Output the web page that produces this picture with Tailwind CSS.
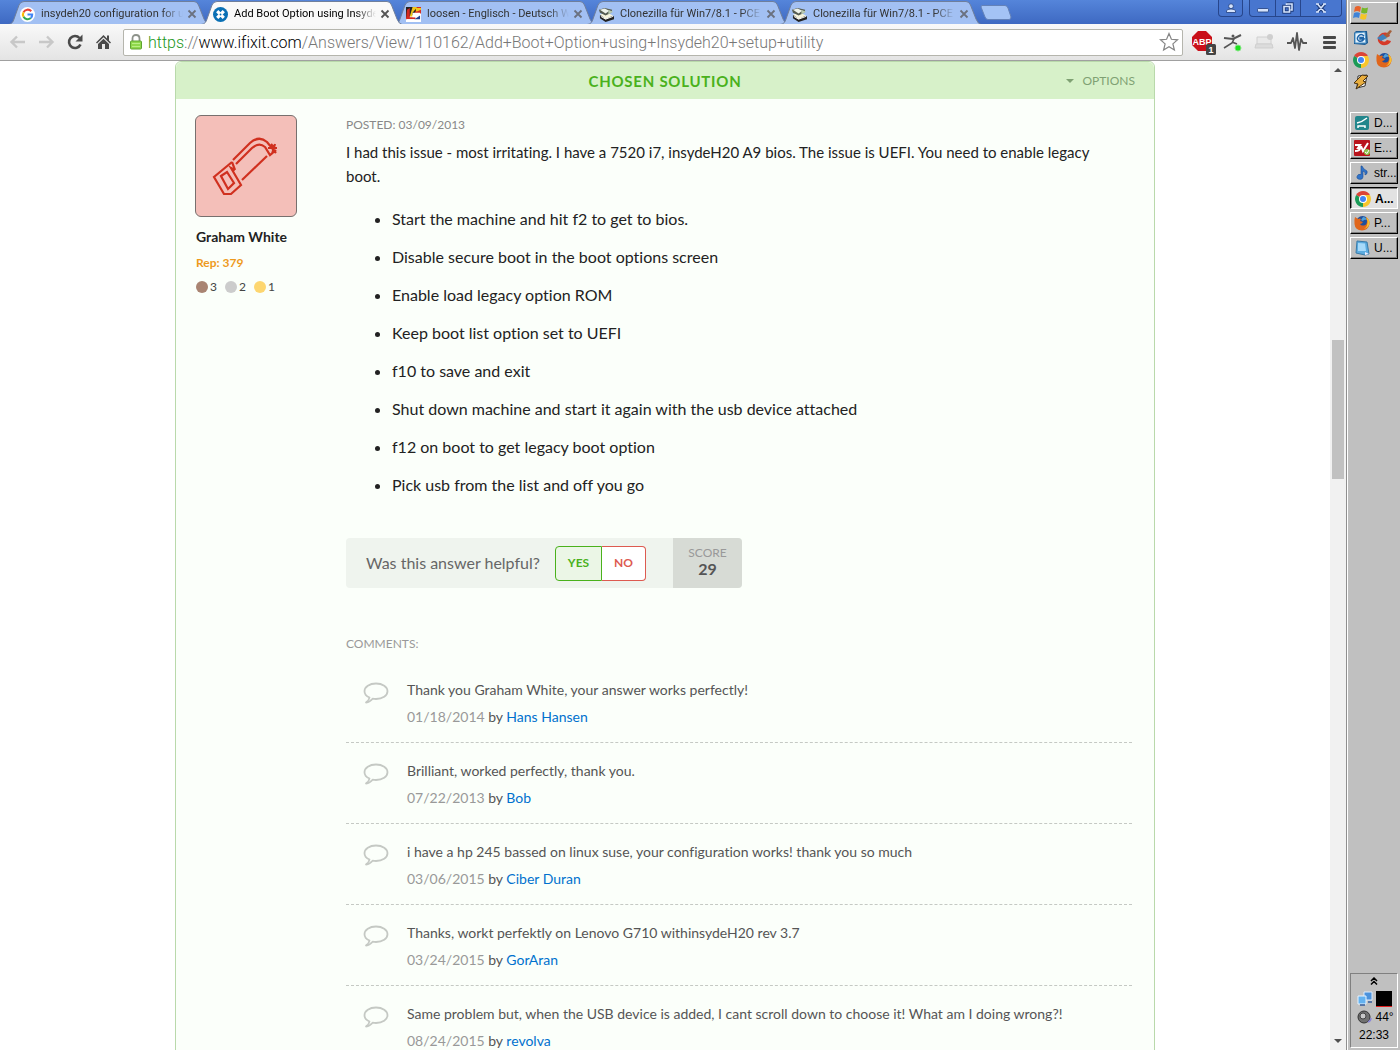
<!DOCTYPE html>
<html lang="en">
<head>
    <meta charset="UTF-8">
    <meta name="viewport" content="width=device-width, initial-scale=1.0">
    <title>Add Boot Option using Insydeh20 setup utility</title>
    <script src="https://cdn.jsdelivr.net/npm/@tailwindcss/browser@4"></script>
</head>
<body class="flex h-screen overflow-hidden bg-white font-['Lato',sans-serif] text-[#222] [font-variant-ligatures:none]">
    <!-- shared icons -->
    <svg class="hidden">
        <symbol id="tab" viewBox="0 0 201 24" preserveAspectRatio="none">
            <path d="M0 24.5C4 24 5 22 6 19L11 5Q12.500 1.500 16 1.500H186Q189 1.500 190.500 5L196 19Q198 24 201 24.500Z" stroke="#6f7f9c"/>
        </symbol>
        <symbol id="close" viewBox="0 0 10 10">
            <path d="M1.500 1.500L8.500 8.500M8.500 1.500L1.500 8.500" stroke="currentColor" stroke-width="1.800" fill="none"/>
        </symbol>
        <symbol id="clonezilla" viewBox="0 0 16 16">
            <path d="M1 9L8 7L16 10V13L7 16L1 12Z" fill="#222"/>
            <path d="M1 8L9 6L15 9L7 13Z" fill="#f5f3dc"/>
            <path d="M0 3L6 1L14 3L13 6L7 9L1 6Z" fill="#555b50"/>
            <path d="M1 3L6 1.500L11 4L7 7Z" fill="#eef2ea"/>
            <path d="M10 3L15 5L10 8Z" fill="#b8c9b0"/>
            <path d="M2 10L7 13L15 10" stroke="#fff" fill="none"/>
        </symbol>
        <symbol id="chrome" viewBox="0 0 16 16">
            <path d="M8 8L1.100 4A8 8 0 0 1 14.900 4Z" fill="#dc4437"/>
            <path d="M8 8L14.900 4A8 8 0 0 1 8 16Z" fill="#f8c62c"/>
            <path d="M8 8L8 16A8 8 0 0 1 1.100 4Z" fill="#1b9a57"/>
            <path d="M8 4H14.900L11.500 10L8 16" fill="#f8c62c"/>
            <circle cx="8" cy="8" r="4" fill="#fff"/>
            <circle cx="8" cy="8" r="3" fill="#4285f4"/>
        </symbol>
        <symbol id="firefox" viewBox="0 0 16 16">
            <circle cx="8.500" cy="7.500" r="6.500" fill="#204f9c"/>
            <path d="M9 2Q12 2 13 5Q10 4 9 6L7 5Z" fill="#4fa0d8"/>
            <path d="M1 2L4 4Q6 3 7 4L6 6L9 7Q8 9 6 9Q7 11 10 10.500Q13 10 13 6L12 2Q16 5 15.500 9Q14 15.500 8 15.500Q1 15 .500 9Q0 5 1 2Z" fill="#e0661c"/>
            <path d="M12 2Q16 5 15.500 9Q14 13 10 14Q14 11 13.500 6Z" fill="#f8c030"/>
        </symbol>
        <symbol id="bubble" viewBox="0 0 26 22">
            <path d="M6.500 15.500C3 14 1.500 11.700 1.500 9.200C1.500 4.900 6.500 1.500 13 1.500S24.500 4.900 24.500 9.200S19.500 17 13 17C11.800 17 10.700 16.900 9.600 16.700C8 18.800 5.500 20.200 3 20.500C5 19 6.300 17.300 6.500 15.500Z" fill="none" stroke="#c5c9c4" stroke-width="1.800" stroke-linejoin="round"/>
        </symbol>
    </svg>

    <div class="flex min-w-0 flex-1 flex-col border-r border-[#8f8f8f]">
        <!-- tab strip -->
        <header class="flex h-6 shrink-0 justify-between bg-linear-to-b from-[#5585da] to-[#3e69c2] font-['Roboto',sans-serif] text-[11px] text-[#333]">
            <nav class="flex pl-2">
                <a href="#" class="relative flex w-[193px] items-center pt-1 pl-3">
                    <svg class="absolute top-0 left-0 h-6 w-[201px] fill-[#a2c0f3]"><use href="#tab"/></svg>
                    <svg class="relative mr-1.5 size-[15px] shrink-0" viewBox="0 0 16 16">
                        <circle cx="8" cy="8" r="8" fill="#fff"/>
                        <g fill="none" stroke-width="2.200">
                            <path d="M12 4.500A5 5 0 0 0 3.800 5.500" stroke="#ea4335"/>
                            <path d="M3.800 5.500A5 5 0 0 0 3.800 10.500" stroke="#fbbc05"/>
                            <path d="M3.800 10.500A5 5 0 0 0 11.500 11.800" stroke="#34a853"/>
                            <path d="M8 8H13A5 5 0 0 1 11.500 11.800" stroke="#4285f4"/>
                        </g>
                    </svg>
                    <span class="relative w-[142px] mask-r-from-85% whitespace-nowrap">insydeh20 configuration for u</span>
                    <svg class="relative ml-1 size-2.5 shrink-0 text-[#6a7180]"><use href="#close"/></svg>
                </a>
                <a href="#" class="relative z-10 flex w-[193px] items-center pt-1 pl-3 text-black">
                    <svg class="absolute top-0 left-0 h-6 w-[201px] fill-[#f9f9f9]"><use href="#tab"/></svg>
                    <svg class="relative mr-1.5 size-[15px] shrink-0" viewBox="0 0 16 16">
                        <circle cx="8" cy="8" r="8" fill="#0a70b5"/>
                        <path d="M4.500 4.500L11.500 11.500M11.500 4.500L4.500 11.500" stroke="#fff" stroke-width="3.400"/>
                        <circle cx="8" cy="8" r="1" fill="#0a70b5"/>
                    </svg>
                    <span class="relative w-[142px] mask-r-from-85% whitespace-nowrap">Add Boot Option using Insyde</span>
                    <svg class="relative ml-1 size-2.5 shrink-0 text-[#555]"><use href="#close"/></svg>
                </a>
                <a href="#" class="relative flex w-[193px] items-center pt-1 pl-3">
                    <svg class="absolute top-0 left-0 h-6 w-[201px] fill-[#a2c0f3]"><use href="#tab"/></svg>
                    <svg class="relative mr-1.5 size-[15px] shrink-0" viewBox="0 0 16 16">
                        <rect width="16" height="16" fill="#fff"/>
                        <path d="M0 0H16V4L0 12Z" fill="#222"/>
                        <path d="M7 0H12L7 6V10H4Z" fill="#f2c617"/>
                        <path d="M12 0H16V7H9Z" fill="#d52a20"/>
                        <path d="M10 1H16V3L11 5Z" fill="#f2c617"/>
                        <path d="M1 3L4 1V11H10V13H0Z" fill="#d52a20"/>
                        <path d="M7 6H15V8H10V9H15V13L11 14H16V16H1V13H12V11H7Z" fill="#fff"/>
                        <path d="M9 13L15 9L15 13Z" fill="#22408f"/>
                    </svg>
                    <span class="relative w-[142px] mask-r-from-85% whitespace-nowrap">loosen - Englisch - Deutsch W</span>
                    <svg class="relative ml-1 size-2.5 shrink-0 text-[#6a7180]"><use href="#close"/></svg>
                </a>
                <a href="#" class="relative flex w-[193px] items-center pt-1 pl-3">
                    <svg class="absolute top-0 left-0 h-6 w-[201px] fill-[#a2c0f3]"><use href="#tab"/></svg>
                    <svg class="relative mr-1.5 size-[15px] shrink-0"><use href="#clonezilla"/></svg>
                    <span class="relative w-[142px] mask-r-from-85% whitespace-nowrap">Clonezilla für Win7/8.1 - PCE</span>
                    <svg class="relative ml-1 size-2.5 shrink-0 text-[#6a7180]"><use href="#close"/></svg>
                </a>
                <a href="#" class="relative flex w-[193px] items-center pt-1 pl-3">
                    <svg class="absolute top-0 left-0 h-6 w-[201px] fill-[#a2c0f3]"><use href="#tab"/></svg>
                    <svg class="relative mr-1.5 size-[15px] shrink-0"><use href="#clonezilla"/></svg>
                    <span class="relative w-[142px] mask-r-from-85% whitespace-nowrap">Clonezilla für Win7/8.1 - PCE</span>
                    <svg class="relative ml-1 size-2.5 shrink-0 text-[#6a7180]"><use href="#close"/></svg>
                </a>
                <button class="mt-[5px] ml-[7px] h-4" aria-label="New tab">
                    <svg class="h-4 w-8" viewBox="0 0 32 16"><path d="M2 0.500H25Q27 .500 28 3L31 12Q31 14.500 29 14.500H8Q6 14.500 5 12L1 2Q1 .500 2 .500Z" fill="#a4c3f5" stroke="#6482b8"/></svg>
                </button>
            </nav>
            <div class="flex gap-1.5 pr-1">
                <button class="flex h-[17px] w-[25px] items-center justify-center rounded-b-sm border border-t-0 border-[#27468c] bg-[#4876cf]" aria-label="Profile">
                    <svg class="size-2.5" viewBox="0 0 10 10" fill="#d5e3fb" stroke="#1f3c7c" stroke-width=".800"><path d="M.500 9.500V8Q.500 6 5 6T9.500 8V9.500Z"/><circle cx="5" cy="3.200" r="2.400"/></svg>
                </button>
                <div class="flex h-[17px] w-[93px] divide-x divide-[#27468c] rounded-b-sm border border-t-0 border-[#27468c] bg-[#4876cf]">
                    <button class="flex w-[26px] items-center justify-center pt-1" aria-label="Minimize">
                        <svg class="h-1.5 w-3" viewBox="0 0 12 6"><rect x=".500" y="1.500" width="11" height="3.500" rx="1" fill="#d5e3fb" stroke="#1f3c7c" stroke-width=".800"/></svg>
                    </button>
                    <button class="flex w-[25px] items-center justify-center" aria-label="Restore">
                        <svg class="size-3" viewBox="0 0 12 12" fill="none"><path d="M4.500 2H10V8H8.500M2 4.500H7.500V10H2Z" stroke="#1f3c7c" stroke-width="3.400"/><path d="M4.500 3V2H10V8H8.500M2 4.500H7.500V10H2Z" stroke="#d5e3fb" stroke-width="1.600"/></svg>
                    </button>
                    <button class="flex flex-1 items-center justify-center" aria-label="Close window">
                        <svg class="h-2.5 w-3" viewBox="0 0 12 10" fill="none"><path d="M2.500 1L9.500 9M9.500 1L2.500 9" stroke="#1f3c7c" stroke-width="3.600"/><path d="M2.500 1L9.500 9M9.500 1L2.500 9M1 1H4M8 1H11M1 9H4M8 9H11" stroke="#d5e3fb" stroke-width="1.600"/></svg>
                    </button>
                </div>
            </div>
        </header>

        <!-- toolbar -->
        <div class="flex h-[37px] shrink-0 items-center border-b border-[#a0a0a0] bg-linear-to-b from-[#f9f9f9] to-[#e4e4e4] pr-[5px] pl-[9px]">
            <div class="flex w-[114px] items-center gap-3">
                <button aria-label="Back"><svg class="h-4 w-[17px]" viewBox="0 0 17 16" fill="none" stroke="#c8c8c8" stroke-width="2.400"><path d="M8 2.500L2.500 8L8 13.500M2.500 8H16"/></svg></button>
                <button aria-label="Forward"><svg class="h-4 w-[17px]" viewBox="0 0 17 16" fill="none" stroke="#c8c8c8" stroke-width="2.400"><path d="M9 2.500L14.500 8L9 13.500M14.500 8H1"/></svg></button>
                <button aria-label="Reload"><svg class="h-4 w-[17px]" viewBox="0 0 17 16"><path d="M13.500 10.500A6 6 0 1 1 12.500 4" fill="none" stroke="#4a4a4a" stroke-width="2.600"/><path d="M15.500 .500V7.500H8.500Z" fill="#4a4a4a"/></svg></button>
                <button aria-label="Home"><svg class="h-4 w-[15px]" viewBox="0 0 15 16" fill="#4a4a4a"><path d="M7.500 1L11 4.500V1.500H13V6.500L15 8.500L14 9.500L7.500 3.200L1 9.500L0 8.500Z"/><path d="M7.500 4.700L13 10V15H9V10H6V15H2V10Z"/></svg></button>
            </div>
            <div class="flex h-[27px] min-w-0 flex-1 items-center rounded-xs border border-[#b5b5ad] bg-white pr-[3px] pl-1.5">
                <svg class="h-4 w-3 shrink-0" viewBox="0 0 12 16"><path d="M2.500 8V4.500Q2.500 1 6 1T9.500 4.500V8" fill="none" stroke="#8d928a" stroke-width="1.800"/><rect x=".500" y="7" width="11" height="8" rx="1" fill="#8fd84b" stroke="#5ea331"/><path d="M2 9.500H10M2 12.500H10" stroke="#b9ef85"/></svg>
                <div class="min-w-0 flex-1 pt-0.5 pl-1.5 font-['Roboto',sans-serif] text-base font-light whitespace-nowrap text-[#777]"><span class="text-[#1b961b]">https</span>://<span class="text-black">www.ifixit.com</span>/Answers/View/110162/Add+Boot+Option+using+Insydeh20+setup+utility</div>
                <button aria-label="Bookmark this page"><svg class="size-5" viewBox="0 0 20 20"><path d="M10 1.500L12.400 7.300L18.600 7.800L13.900 11.900L15.400 18L10 14.700L4.600 18L6.100 11.900L1.400 7.800L7.600 7.300Z" fill="#fff" stroke="#858585" stroke-width="1.200"/></svg></button>
            </div>
            <div class="flex items-center gap-2 pl-1.5">
                <button aria-label="Adblock Plus"><svg class="size-6 overflow-visible" viewBox="-3 0 24 24"><path d="M6 1H14L20 7V15L14 21H6L0 15V7Z" fill="#c9101a"/><text x="10" y="14.500" font-family="Liberation Sans" font-size="9" font-weight="700" fill="#fff" text-anchor="middle">ABP</text><rect x="14" y="14" width="10" height="11" rx="1.500" fill="#444"/><text x="19" y="23" font-family="Liberation Sans" font-size="9" font-weight="700" fill="#fff" text-anchor="middle">1</text></svg></button>
                <button aria-label="Extension"><svg class="h-6 w-6" viewBox="0 0 24 24" fill="none" stroke="#555"><path d="M3 8L12 9L20 5" stroke-width="2"/><path d="M13 9L11 13L3 18M11 12L16 14" stroke-width="1.600"/><circle cx="12" cy="6" r="1.500" fill="#555" stroke="none"/><circle cx="17" cy="18" r="3" fill="#1de01d" stroke="#85e685"/></svg></button>
                <button aria-label="Capture"><svg class="h-6 w-6" viewBox="0 0 24 24"><path d="M4 7H18V14H4Z" fill="#e9e9e9" stroke="#d0d0d0"/><path d="M3 14H19L20 18H2Z" fill="#dcdcdc" stroke="#cfcfcf"/><circle cx="17" cy="7" r="3" fill="#cfcfcf"/></svg></button>
                <button aria-label="Monitor"><svg class="h-6 w-6" viewBox="0 0 24 24" fill="none" stroke="#555" stroke-width="1.800" stroke-linejoin="round"><path d="M2 13H6L8 8L10 18L12 3L14 20L16 9L18 13H22"/></svg></button>
                <button aria-label="Menu"><svg class="h-6 w-6" viewBox="0 0 24 24" fill="#484848"><rect x="6" y="6" width="13" height="3" rx="1"/><rect x="6" y="11" width="13" height="3" rx="1"/><rect x="6" y="16" width="13" height="3" rx="1"/></svg></button>
            </div>
        </div>

        <div class="flex min-h-0 flex-1">
            <!-- page -->
            <main class="min-w-0 flex-1 overflow-hidden">
                <article class="mx-auto max-w-[980px] rounded-t-md border border-[#b9d9ab] bg-[#fbfffa]">
                    <div class="grid h-[37px] grid-cols-3 items-center rounded-t-md bg-[#d7f1c9] px-[19px]">
                        <h2 class="col-start-2 text-center text-[15px] leading-5 font-bold tracking-wider whitespace-nowrap text-[#4ab11c]">CHOSEN SOLUTION</h2>
                        <button class="flex items-center gap-2 justify-self-end text-xs text-[#7fa173]">
                            <svg class="h-1 w-2" viewBox="0 0 8 4"><path d="M0 0H8L4 4Z" fill="#7fa173"/></svg>OPTIONS
                        </button>
                    </div>
                    <div class="flex pt-4 pr-[22px] pl-[19px]">
                        <aside class="w-[151px] shrink-0">
                            <svg class="size-[102px] rounded-md border border-[#77706e] bg-[#f4bfb9]" viewBox="0 0 100 100" fill="none" stroke="#d0301f" stroke-width="2.200">
                                <path d="M37 44L54 27Q63 19 71 26L80 37M40 48L56 32Q63 26 69 31L74 39L80 34M75 28L79 33M72 32L81 32M79 28L76 38"/>
                                <path d="M46 64L71 40"/>
                                <path d="M36 46L18 61L28 78L35 78L45 69L35 52L39 54"/>
                                <path d="M36 46L39 54"/>
                                <path d="M25 60L31 56L38 67L32 73Z"/>
                            </svg>
                            <div class="pl-px">
                                <a href="#" class="mt-2.5 block text-sm font-bold">Graham White</a>
                                <div class="mt-2 text-xs leading-4 font-bold text-[#ee9a1c]">Rep: 379</div>
                                <div class="mt-2 flex gap-2 text-xs leading-4 text-[#444]">
                                    <span class="flex items-center gap-0.5"><i class="size-3 rounded-full bg-[#a98472]"></i>3</span>
                                    <span class="flex items-center gap-0.5"><i class="size-3 rounded-full bg-[#ccc]"></i>2</span>
                                    <span class="flex items-center gap-0.5"><i class="size-3 rounded-full bg-[#fdd670]"></i>1</span>
                                </div>
                            </div>
                        </aside>
                        <section class="min-w-0 flex-1">
                            <div class="pt-0.5 text-xs leading-4 text-[#888]">POSTED: 03/09/2013</div>
                            <p class="mt-[7px] pr-4 text-[15px] leading-6">I had this issue - most irritating. I have a 7520 i7, insydeH20 A9 bios. The issue is UEFI. You need to enable legacy boot.</p>
                            <ul class="mt-[19px] flex list-disc flex-col gap-3.5 pl-[46px] text-base leading-6">
                                <li>Start the machine and hit f2 to get to bios.</li>
                                <li>Disable secure boot in the boot options screen</li>
                                <li>Enable load legacy option ROM</li>
                                <li>Keep boot list option set to UEFI</li>
                                <li>f10 to save and exit</li>
                                <li>Shut down machine and start it again with the usb device attached</li>
                                <li>f12 on boot to get legacy boot option</li>
                                <li>Pick usb from the list and off you go</li>
                            </ul>
                            <div class="mt-[41px] flex h-[50px] w-[396px] items-center overflow-hidden rounded-sm bg-[#eff4ee] pl-5">
                                <span class="flex-1 text-base text-[#666]">Was this answer helpful?</span>
                                <button class="h-[35px] w-[47px] rounded-l-sm border border-[#4ab11c] bg-[#ebf6e6] text-xs font-bold text-[#4ab11c]">YES</button>
                                <button class="h-[35px] w-11 rounded-r-sm border border-l-0 border-[#dd5a50] bg-white text-xs font-bold text-[#dd5a50]">NO</button>
                                <div class="ml-[27px] h-full w-[69px] bg-[#d7dbd5] pt-[7px] text-center">
                                    <div class="text-xs leading-4 text-[#999]">SCORE</div>
                                    <div class="text-base leading-4 font-bold text-[#555]">29</div>
                                </div>
                            </div>
                            <h3 class="mt-12 text-xs leading-4 text-[#999]">COMMENTS:</h3>
                            <ul class="mt-2.5 text-sm leading-[27px] text-[#555]">
                                <li class="flex border-b border-dashed border-[#c5c9c4] pt-3.5 pb-3 pl-[17px]">
                                    <svg class="mt-1.5 mr-[18px] h-[22px] w-[26px] shrink-0"><use href="#bubble"/></svg>
                                    <div><p>Thank you Graham White, your answer works perfectly!</p><p><span class="text-[#999]">01/18/2014</span> by <a href="#" class="text-[#0071ce]">Hans Hansen</a></p></div>
                                </li>
                                <li class="flex border-b border-dashed border-[#c5c9c4] pt-3.5 pb-3 pl-[17px]">
                                    <svg class="mt-1.5 mr-[18px] h-[22px] w-[26px] shrink-0"><use href="#bubble"/></svg>
                                    <div><p>Brilliant, worked perfectly, thank you.</p><p><span class="text-[#999]">07/22/2013</span> by <a href="#" class="text-[#0071ce]">Bob</a></p></div>
                                </li>
                                <li class="flex border-b border-dashed border-[#c5c9c4] pt-3.5 pb-3 pl-[17px]">
                                    <svg class="mt-1.5 mr-[18px] h-[22px] w-[26px] shrink-0"><use href="#bubble"/></svg>
                                    <div><p>i have a hp 245 bassed on linux suse, your configuration works! thank you so much</p><p><span class="text-[#999]">03/06/2015</span> by <a href="#" class="text-[#0071ce]">Ciber Duran</a></p></div>
                                </li>
                                <li class="flex border-b border-dashed border-[#c5c9c4] pt-3.5 pb-3 pl-[17px]">
                                    <svg class="mt-1.5 mr-[18px] h-[22px] w-[26px] shrink-0"><use href="#bubble"/></svg>
                                    <div><p>Thanks, workt perfektly on Lenovo G710 withinsydeH20 rev 3.7</p><p><span class="text-[#999]">03/24/2015</span> by <a href="#" class="text-[#0071ce]">GorAran</a></p></div>
                                </li>
                                <li class="flex border-b border-dashed border-[#c5c9c4] pt-3.5 pb-3 pl-[17px]">
                                    <svg class="mt-1.5 mr-[18px] h-[22px] w-[26px] shrink-0"><use href="#bubble"/></svg>
                                    <div><p>Same problem but, when the USB device is added, I cant scroll down to choose it! What am I doing wrong?!</p><p><span class="text-[#999]">08/24/2015</span> by <a href="#" class="text-[#0071ce]">revolva</a></p></div>
                                </li>
                            </ul>
                        </section>
                    </div>
                </article>
            </main>
            <!-- scrollbar -->
            <div class="flex w-4 shrink-0 flex-col items-center bg-[#f1f1f1] py-[7px]">
                <svg class="h-1 w-2" viewBox="0 0 8 4"><path d="M0 4L4 0L8 4Z" fill="#505050"/></svg>
                <div class="flex w-3 flex-1 flex-col"><div class="flex-[268]"></div><div class="flex-[139] bg-[#c1c1c1]"></div><div class="flex-[560]"></div></div>
                <svg class="h-1 w-2" viewBox="0 0 8 4"><path d="M0 0L4 4L8 0Z" fill="#505050"/></svg>
            </div>
        </div>
    </div>

    <!-- taskbar -->
    <aside class="flex w-[53px] shrink-0 flex-col border-l border-white bg-[#c0c0c0] px-0.5 py-0.5 font-['Liberation_Sans',sans-serif] text-xs text-black">
        <button class="flex h-[22px] items-center border border-t-white border-r-black border-b-black border-l-white pl-0.5 shadow-[inset_-1px_-1px_#808080]" aria-label="Start">
            <svg class="size-4" viewBox="0 0 16 16"><path d="M2 2Q5 0 8 2L7 7Q4 5 1 7Z" fill="#e8622a"/><path d="M9 2.500Q12 4 15 2.500L14 8Q11 9 8 7.500Z" fill="#76b82a"/><path d="M1 8Q4 6.500 7 8L6 13Q3 11.500 0 13Z" fill="#3f83d8"/><path d="M8 8.500Q11 10 14 9L13 14Q10 15.500 7 13.500Z" fill="#f5c526"/></svg>
        </button>
        <div class="grid grid-cols-[16px_16px] gap-x-[7px] gap-y-1.5 pt-1.5 pl-[3px]">
            <svg class="size-4" viewBox="0 0 16 16"><path d="M3 1H14L15 13L12 15L1 14V3Z" fill="#1c5b94"/><path d="M2 3L12 2L13 13L2 13Z" fill="#e6f2fb" stroke="#4a93c8"/><path d="M11 6Q8 3 5.500 6T6 11Q9 12 11 9H7V7.500H11" fill="none" stroke="#1d64a8" stroke-width="1.500"/></svg>
            <svg class="size-4" viewBox="0 0 16 16"><path d="M14 6Q12 1 6 3Q1 6 2 11Q4 16 10 15Q14 14 15 11L11 10Q9 13 6 11Q5 8 8 6L12 7Z" fill="#d63a28"/><path d="M14 0L16 1L11 8L8 6Z" fill="#a5603a"/><path d="M1 8L7 4L11 8L5 11Z" fill="#3f82bd"/></svg>
            <svg class="size-4"><use href="#chrome"/></svg>
            <svg class="size-4"><use href="#firefox"/></svg>
            <svg class="size-4" viewBox="0 0 16 16"><path d="M5 2L14 1L12 12L4 14Z" fill="#fff" stroke="#333"/><path d="M9 1L15 2L10 7L13 8L3 15L5 10L1 9Z" fill="#e9ae3e" stroke="#4a3210"/></svg>
        </div>
        <div class="mt-[22px] flex flex-col gap-[3px]">
            <button class="flex h-[22px] items-center gap-1 border border-t-white border-r-black border-b-black border-l-white pl-[3px] shadow-[inset_-1px_-1px_#808080]">
                <svg class="size-4 shrink-0" viewBox="0 0 16 16"><rect x="1" y="1" width="14" height="14" rx="2" fill="#21868c"/><path d="M3 8Q8 7 13 3M4 13V11H11V13" fill="none" stroke="#fff" stroke-width="1.500"/></svg>D...
            </button>
            <button class="flex h-[22px] items-center gap-1 border border-t-white border-r-black border-b-black border-l-white pl-[3px] shadow-[inset_-1px_-1px_#808080]">
                <svg class="size-4 shrink-0" viewBox="0 0 16 16"><rect width="16" height="16" rx="1" fill="#b9141c"/><path d="M1 5H6L4 8H6Q6 11 1 11M7 6L9 11L14 3" fill="none" stroke="#fff" stroke-width="2"/><circle cx="13" cy="12" r="3" fill="#8bc34a"/><path d="M11 12L13 13.500L15 10" fill="none" stroke="#fff"/></svg>E...
            </button>
            <button class="flex h-[22px] items-center gap-1 border border-t-white border-r-black border-b-black border-l-white pl-[3px] shadow-[inset_-1px_-1px_#808080]">
                <svg class="size-4 shrink-0" viewBox="0 0 16 16"><path d="M8 1Q9 4 13 6Q14 9 11 10Q12 7 9 6V12A3 2.500 0 1 1 7 9.500V1Z" fill="#2f73c9" stroke="#1b4c91" stroke-width=".600"/></svg>str...
            </button>
            <button class="flex h-[22px] items-center gap-1 border border-t-black border-r-white border-b-white border-l-black bg-[#e2e2e2] pt-px pl-1 font-bold shadow-[inset_1px_1px_#808080]">
                <svg class="size-4 shrink-0"><use href="#chrome"/></svg>A...
            </button>
            <button class="flex h-[22px] items-center gap-1 border border-t-white border-r-black border-b-black border-l-white pl-[3px] shadow-[inset_-1px_-1px_#808080]">
                <svg class="size-4 shrink-0"><use href="#firefox"/></svg>P...
            </button>
            <button class="flex h-[22px] items-center gap-1 border border-t-white border-r-black border-b-black border-l-white pl-[3px] shadow-[inset_-1px_-1px_#808080]">
                <svg class="size-4 shrink-0" viewBox="0 0 16 16"><path d="M3 1L13 2L15 14L11 15L2 13Z" fill="#5cace0" stroke="#397aa8"/><path d="M4 3L11 3.500L12 11L4 11Z" fill="#a7dafa"/><path d="M11 15L11 12L15 14Z" fill="#eef"/></svg>U...
            </button>
        </div>
        <div class="mt-auto flex flex-col items-center border border-t-[#808080] border-r-white border-b-white border-l-[#808080] pt-[3px] pb-1">
            <svg class="h-2 w-2" viewBox="0 0 8 8" fill="none" stroke="#000" stroke-width="1.500"><path d="M1 4L4 1L7 4M1 7.500L4 4.500L7 7.500"/></svg>
            <div class="mt-1.5 grid grid-cols-[16px_16px] items-center gap-x-[3px] gap-y-0.5">
                <svg class="size-4" viewBox="0 0 16 16"><path d="M7 1H15V9H7Z" fill="#4b92dc" stroke="#dcecff"/><path d="M1 5H9V13H1Z" fill="#64b2f0" stroke="#e7f3ff"/><path d="M3 14H8M11 11H15" stroke="#345c9a" stroke-width="1.500"/></svg>
                <div class="size-4 border-b border-[#e02020] bg-black"></div>
                <svg class="size-4" viewBox="0 0 16 16"><circle cx="7" cy="8" r="6" fill="#707070" stroke="#333"/><circle cx="6" cy="7" r="3" fill="#c8c8c8" stroke="#444"/><path d="M11 13Q14 12 14 9" fill="none" stroke="#8a86d8" stroke-width="1.500"/></svg>
                <span class="leading-4">44°</span>
            </div>
            <time class="mt-0.5 leading-4">22:33</time>
        </div>
    </aside>
</body>
</html>
